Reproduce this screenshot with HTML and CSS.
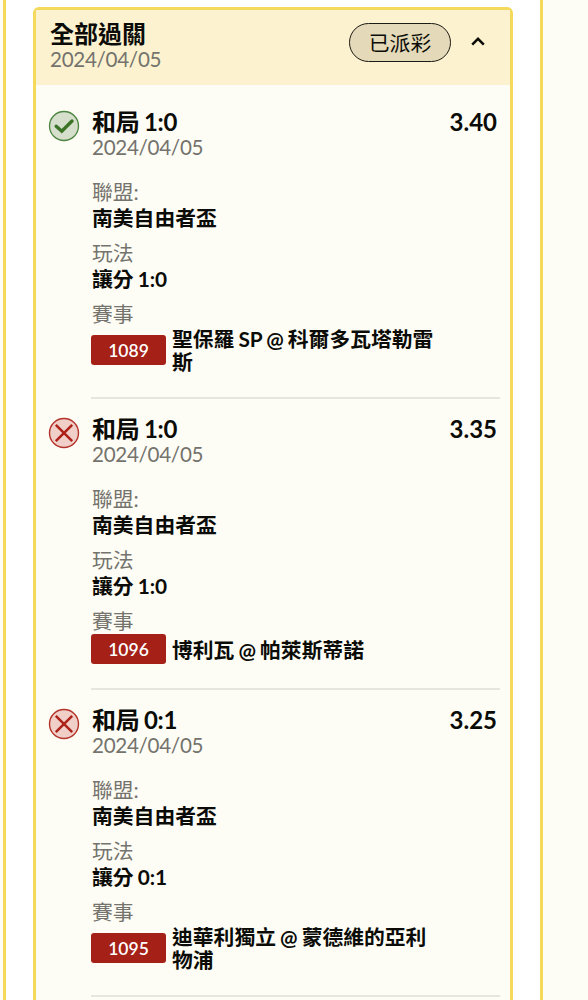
FILE: index.html
```html
<!DOCTYPE html>
<html lang="zh-Hant">
<head>
    <meta charset="UTF-8">
    <meta name="viewport" content="width=device-width, initial-scale=1.0">
    <title>全部過關</title>
    <link rel="stylesheet" href="styles.css">
</head>
<body>
    <div class="panel">
        <div class="card">
            <div class="card-header">
                <div class="heading">
                    <div class="title">全部過關</div>
                    <div class="date">2024/04/05</div>
                </div>
                <span class="status">已派彩</span>
                <svg class="chevron" width="14" height="10" viewBox="0 0 14 10">
                    <path d="M1.2 8.6 L7 2.8 L12.8 8.6" fill="none" stroke="#0b0b08" stroke-width="2.5"/>
                </svg>
            </div>

            <div class="bet">
                <svg class="result" width="32" height="32" viewBox="0 0 32 32">
                    <circle cx="16" cy="16" r="14.5" fill="#d5dfcc" stroke="#4b8540" stroke-width="1.3"/>
                    <path d="M8.2 16.2 L13.8 21.2 L24 11" fill="none" stroke="#3b7426" stroke-width="3.4" stroke-linecap="round" stroke-linejoin="miter"/>
                </svg>
                <div class="bet-body">
                    <div class="bet-top">
                        <div class="title">和局 1:0</div>
                        <div class="odds">3.40</div>
                    </div>
                    <div class="date">2024/04/05</div>
                    <div class="fields">
                        <div class="label">聯盟:</div>
                        <div class="value">南美自由者盃</div>
                        <div class="label">玩法</div>
                        <div class="value">讓分 1:0</div>
                        <div class="label">賽事</div>
                    </div>
                    <div class="match">
                        <span class="match-id">1089</span>
                        <span class="teams">聖保羅 SP @ 科爾多瓦塔勒雷斯</span>
                    </div>
                </div>
            </div>

            <div class="bet">
                <svg class="result" width="32" height="32" viewBox="0 0 32 32">
                    <circle cx="16" cy="16" r="14.5" fill="#efcfc8" stroke="#b3342b" stroke-width="1.4"/>
                    <path d="M7.8 7.8 L24.2 24.2 M24.2 7.8 L7.8 24.2" fill="none" stroke="#ad2118" stroke-width="2.5"/>
                </svg>
                <div class="bet-body">
                    <div class="bet-top">
                        <div class="title">和局 1:0</div>
                        <div class="odds">3.35</div>
                    </div>
                    <div class="date">2024/04/05</div>
                    <div class="fields">
                        <div class="label">聯盟:</div>
                        <div class="value">南美自由者盃</div>
                        <div class="label">玩法</div>
                        <div class="value">讓分 1:0</div>
                        <div class="label">賽事</div>
                    </div>
                    <div class="match">
                        <span class="match-id">1096</span>
                        <span class="teams">博利瓦 @ 帕萊斯蒂諾</span>
                    </div>
                </div>
            </div>

            <div class="bet">
                <svg class="result" width="32" height="32" viewBox="0 0 32 32">
                    <circle cx="16" cy="16" r="14.5" fill="#efcfc8" stroke="#b3342b" stroke-width="1.4"/>
                    <path d="M7.8 7.8 L24.2 24.2 M24.2 7.8 L7.8 24.2" fill="none" stroke="#ad2118" stroke-width="2.5"/>
                </svg>
                <div class="bet-body">
                    <div class="bet-top">
                        <div class="title">和局 0:1</div>
                        <div class="odds">3.25</div>
                    </div>
                    <div class="date">2024/04/05</div>
                    <div class="fields">
                        <div class="label">聯盟:</div>
                        <div class="value">南美自由者盃</div>
                        <div class="label">玩法</div>
                        <div class="value">讓分 0:1</div>
                        <div class="label">賽事</div>
                    </div>
                    <div class="match">
                        <span class="match-id">1095</span>
                        <span class="teams">迪華利獨立 @ 蒙德維的亞利物浦</span>
                    </div>
                </div>
            </div>
        </div>
    </div>
</body>
</html>
```
FILE: styles.css
```css
* {
    box-sizing: border-box;
}

body {
    margin: 0;
    height: 1000px;
    overflow: hidden;
    background-color: #fefdf5;
    font-family: Lato, "Noto Sans CJK TC", sans-serif;
    font-size: 20.8px;
    line-height: 26px;
    word-spacing: -1px;
    color: #0b0b08;
}

.panel {
    width: 540px;
    height: 1020px;
    margin-left: 3px;
    padding: 7px 27px 0;
    background-color: #fff;
    border: solid #f4d95b;
    border-width: 0 3px;
}

.card {
    height: 1010px;
    background-color: #fefdf5;
    border: 3px solid #f4d95b;
    border-radius: 6px;
}

.card-header {
    display: flex;
    align-items: flex-start;
    height: 75px;
    margin-bottom: 7px;
    padding: 11px 25px 0 14px;
    background-color: #fcf2d0;
}

.heading {
    flex: 1;
}

.title {
    font-size: 24px;
    font-weight: 700;
    line-height: 26px;
}

.date {
    font-size: 20.6px;
    line-height: 25px;
    letter-spacing: -0.3px;
    color: #74736d;
}

.status {
    width: 102px;
    height: 39px;
    margin-top: 2px;
    border: 1.5px solid #1c1a14;
    border-radius: 20px;
    background-color: #e4d9b8;
    line-height: 37px;
    text-align: center;
}

.chevron {
    margin: 15px 0 0 20px;
}

.bet {
    display: flex;
    padding: 17px 10px 0 12px;
}

.result {
    flex: none;
    margin: 1px 11px 0 0;
}

.bet-body {
    flex: 1;
    padding-bottom: 24px;
    border-bottom: 2px solid #e6e5de;
}

.bet-body .date,
.fields {
    padding-left: 1px;
}

.bet-top {
    display: flex;
    justify-content: space-between;
    padding: 0 3px 0 1px;
}

.bet-top .title {
    letter-spacing: -0.3px;
}

.odds {
    font-size: 24px;
    font-weight: 700;
}

.fields {
    margin-top: 19px;
}

.label {
    color: #74736d;
}

.value {
    margin-bottom: 9px;
    font-weight: 700;
}

.match {
    display: flex;
    align-items: center;
    gap: 6px;
}

.match-id {
    flex: none;
    width: 75px;
    height: 30px;
    border-radius: 3px;
    background-color: #a52016;
    color: #fff;
    font-size: 17.5px;
    font-weight: 600;
    line-height: 31px;
    text-align: center;
}

.teams {
    width: 270px;
    font-weight: 700;
    line-height: 23px;
}
```
